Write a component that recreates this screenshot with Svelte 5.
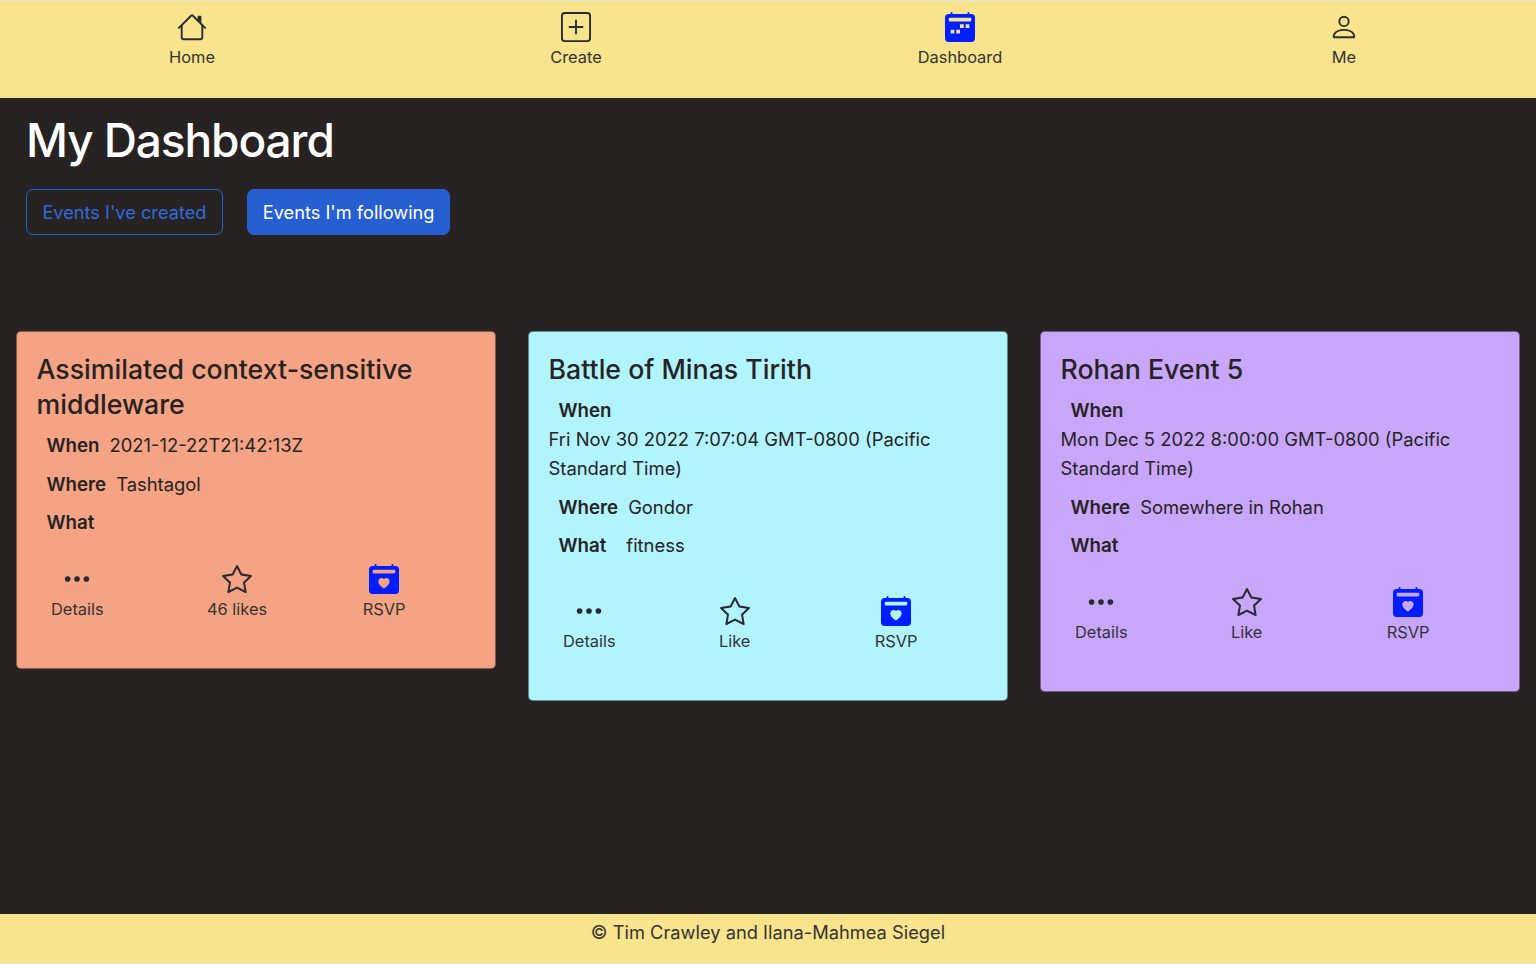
<script>
  const calBase = "M4 .5a.5.5 0 0 0-1 0V1H2a2 2 0 0 0-2 2v11a2 2 0 0 0 2 2h12a2 2 0 0 0 2-2V3a2 2 0 0 0-2-2h-1V.5a.5.5 0 0 0-1 0V1H4V.5zM2.545 3h10.91c.3 0 .545.224.545.5v1c0 .276-.244.5-.545.5H2.545C2.245 5 2 4.776 2 4.5v-1c0-.276.244-.5.545-.5z";
  const heart = "M8 7.993c1.664-1.711 5.825 1.283 0 5.132-5.825-3.85-1.664-6.843 0-5.132z";
  const week = "M8 6.5h2v2H8zM11 6.5h2v2h-2zM3 9.5h2v2H3zM6 9.5h2v2H6z";

  const navItems = [
    { label: "Home", icon: "home" },
    { label: "Create", icon: "plus" },
    { label: "Dashboard", icon: "week" },
    { label: "Me", icon: "person" }
  ];

  const events = [
    { title: "Assimilated context-sensitive middleware", color: "#f4a384", when: "2021-12-22T21:42:13Z", where: "Tashtagol", tag: "", likes: "46 likes" },
    { title: "Battle of Minas Tirith", color: "#b2f4fe", when: "Fri Nov 30 2022 7:07:04 GMT-0800 (Pacific Standard Time)", where: "Gondor", tag: "fitness", likes: "Like" },
    { title: "Rohan Event 5", color: "#c8a6f9", when: "Mon Dec 5 2022 8:00:00 GMT-0800 (Pacific Standard Time)", where: "Somewhere in Rohan", tag: "", likes: "Like" }
  ];
</script>

{#snippet icon(name)}
  <svg class="icon" class:blue={name === "week" || name === "heart"} viewBox="0 0 16 16" fill="currentColor" aria-hidden="true">
    {#if name === "home"}
      <path fill-rule="evenodd" d="M2 13.5V7h1v6.5a.5.5 0 0 0 .5.5h9a.5.5 0 0 0 .5-.5V7h1v6.5a1.5 1.5 0 0 1-1.5 1.5h-9A1.5 1.5 0 0 1 2 13.5zm11-11V6l-2-2V2.5a.5.5 0 0 1 .5-.5h1a.5.5 0 0 1 .5.5z" />
      <path fill-rule="evenodd" d="M7.293 1.5a1 1 0 0 1 1.414 0l6.647 6.646a.5.5 0 0 1-.708.708L8 2.207 1.354 8.854a.5.5 0 1 1-.708-.708L7.293 1.5z" />
    {:else if name === "plus"}
      <path d="M14 1a1 1 0 0 1 1 1v12a1 1 0 0 1-1 1H2a1 1 0 0 1-1-1V2a1 1 0 0 1 1-1h12zM2 0a2 2 0 0 0-2 2v12a2 2 0 0 0 2 2h12a2 2 0 0 0 2-2V2a2 2 0 0 0-2-2H2z" />
      <path d="M8 4a.5.5 0 0 1 .5.5v3h3a.5.5 0 0 1 0 1h-3v3a.5.5 0 0 1-1 0v-3h-3a.5.5 0 0 1 0-1h3v-3A.5.5 0 0 1 8 4z" />
    {:else if name === "week"}
      <path fill-rule="evenodd" d={calBase + week} />
    {:else if name === "heart"}
      <path fill-rule="evenodd" d={calBase + heart} />
    {:else if name === "person"}
      <path d="M8 8a3 3 0 1 0 0-6 3 3 0 0 0 0 6zm2-3a2 2 0 1 1-4 0 2 2 0 0 1 4 0zm4 8c0 1-1 1-1 1H3s-1 0-1-1 1-4 6-4 6 3 6 4zm-1-.004c-.001-.246-.154-.986-.832-1.664C11.516 10.68 10.289 10 8 10c-2.29 0-3.516.68-4.168 1.332-.678.678-.83 1.418-.832 1.664h10z" />
    {:else if name === "dots"}
      <path d="M3 9.5a1.5 1.5 0 1 1 0-3 1.5 1.5 0 0 1 0 3zm5 0a1.5 1.5 0 1 1 0-3 1.5 1.5 0 0 1 0 3zm5 0a1.5 1.5 0 1 1 0-3 1.5 1.5 0 0 1 0 3z" />
    {:else if name === "star"}
      <path d="M2.866 14.85c-.078.444.36.791.746.593l4.39-2.256 4.389 2.256c.386.198.824-.149.746-.592l-.83-4.73 3.522-3.356c.33-.314.16-.888-.282-.95l-4.898-.696L8.465.792a.513.513 0 0 0-.927 0L5.354 5.12l-4.898.696c-.441.062-.612.636-.283.95l3.523 3.356-.83 4.73zm4.905-2.767-3.686 1.894.694-3.957a.565.565 0 0 0-.163-.505L1.71 6.745l4.052-.576a.525.525 0 0 0 .393-.288L8 2.223l1.847 3.658a.525.525 0 0 0 .393.288l4.052.575-2.906 2.77a.565.565 0 0 0-.163.506l.694 3.957-3.686-1.894a.503.503 0 0 0-.461 0z" />
    {/if}
  </svg>
{/snippet}

<div class="page">
  <nav class="topnav">
    {#each navItems as item}
      <a class="nav-item" href="#top">
        {@render icon(item.icon)}
        <span>{item.label}</span>
      </a>
    {/each}
  </nav>

  <main class="content">
    <h1>My Dashboard</h1>
    <div class="tabs">
      <button class="tab outline" type="button">Events I've created</button>
      <button class="tab solid" type="button">Events I'm following</button>
    </div>

    <div class="cards">
      {#each events as ev}
        <article class="card" style="background-color: {ev.color}">
          <h2>{ev.title}</h2>
          <p class="row"><b>When</b><span class="val">{ev.when}</span></p>
          <p class="row"><b>Where</b><span class="val">{ev.where}</span></p>
          <p class="row"><b>What</b>{#if ev.tag}<span class="tag">{ev.tag}</span>{/if}</p>
          <div class="actions">
            <div class="action">
              {@render icon("dots")}
              <span>Details</span>
            </div>
            <div class="action">
              {@render icon("star")}
              <span>{ev.likes}</span>
            </div>
            <div class="action end">
              {@render icon("heart")}
              <span>RSVP</span>
            </div>
          </div>
        </article>
      {/each}
    </div>
  </main>

  <footer class="foot">© Tim Crawley and Ilana-Mahmea Siegel</footer>
</div>

<style>
  :global(body) {
    margin: 0;
    background: #272323;
  }

  .page {
    height: 964px;
    display: flex;
    flex-direction: column;
    font-family: Inter, "Liberation Sans", sans-serif;
    color: #272323;
    overflow: hidden;
  }

  .topnav {
    display: grid;
    grid-template-columns: repeat(4, 1fr);
    height: 86px;
    padding-top: 11px;
    background: #f8e48c;
    border-top: 1px solid #e2e2e2;
  }

  .nav-item {
    display: flex;
    flex-direction: column;
    align-items: center;
    gap: 3px;
    color: #333;
    text-decoration: none;
    font-size: 16.4px;
    line-height: 24px;
  }

  .icon {
    display: block;
    width: 30px;
    height: 30px;
    color: #272b30;
  }

  .icon.blue {
    color: #001eff;
  }

  .content {
    flex: 1;
    min-height: 0;
  }

  h1 {
    margin: 13px 0 20px 26px;
    font-size: 46px;
    line-height: 58px;
    font-weight: 500;
    letter-spacing: -1.1px;
    color: #fff;
  }

  .tabs {
    display: flex;
    gap: 24px;
    margin-left: 26px;
  }

  .tab {
    height: 46px;
    padding: 0 15.4px;
    border: 1.5px solid #2660d0;
    border-radius: 7px;
    font: inherit;
    font-size: 18.2px;
    background: transparent;
    color: #2f6bdc;
  }

  .tab.solid {
    padding: 0 15px;
    background: #2660d0;
    color: #fff;
  }

  .cards {
    display: grid;
    grid-template-columns: repeat(3, 1fr);
    align-items: start;
    margin-top: 96px;
  }

  .card {
    margin: 0 16px;
    padding: 20px 19.5px 0;
    border: 1px solid rgba(0, 0, 0, 0.45);
    border-radius: 5px;
    font-size: 18.4px;
    line-height: 29px;
  }

  h2 {
    margin: 0 0 9px;
    font-size: 26.7px;
    line-height: 35px;
    font-weight: 500;
  }

  .row {
    margin: 0 0 9.6px;
  }

  .row b {
    display: inline-block;
    padding: 0 10px;
    font-size: 18.7px;
    font-weight: 600;
  }

  .val {
    display: inline-block;
  }

  .tag {
    display: inline-block;
    padding: 0 10px 9px;
  }

  .actions {
    display: grid;
    grid-template-columns: 156px 1fr auto;
    padding: 17px 70px 47px 14.5px;
  }

  .action {
    display: flex;
    flex-direction: column;
    align-items: center;
    gap: 3px;
    justify-self: start;
    font-size: 16.4px;
    line-height: 24px;
    color: #333;
  }

  .foot {
    height: 49px;
    padding-top: 6px;
    box-sizing: border-box;
    margin-bottom: 1px;
    background: #f8e48c;
    text-align: center;
    font-size: 18.3px;
    line-height: 24px;
    color: #333;
    box-shadow: 0 1px 0 #e2e2e2;
  }
</style>
